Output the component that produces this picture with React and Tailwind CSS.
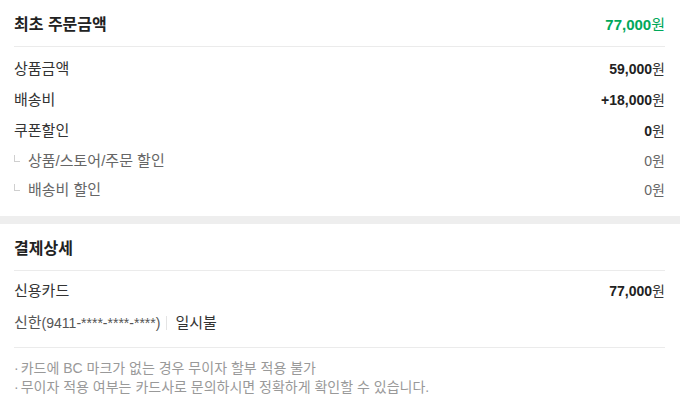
const font = { fontFamily: '"Liberation Sans", "Noto Sans CJK KR", sans-serif' };

const amounts = [
  { label: '상품금액', value: '59,000' },
  { label: '배송비', value: '+18,000' },
  { label: '쿠폰할인', value: '0' },
];

const discounts = [
  { label: '상품/스토어/주문 할인', value: '0' },
  { label: '배송비 할인', value: '0' },
];

function Corner() {
  return <span className="inline-block w-[6px] h-[7px] border-l border-b border-[#cfcfcf] mr-[8px] mb-[6px] self-center" />;
}

export default function App() {
  return (
    <div className="w-[680px] h-[412px] bg-white text-[#222]" style={font}>
      <section className="pl-[14px] pr-[15px]">
        <div className="h-[47px] pt-[4px] flex items-center justify-between border-b border-[#ebebeb]">
          <h2 className="text-[16px] font-bold">최초 주문금액</h2>
          <span className="text-[15px] font-bold text-[#00a85b]">
            77,000<span className="font-normal">원</span>
          </span>
        </div>
        <div className="pt-[6px] pb-[12px]">
          {amounts.map((row) => (
            <div key={row.label} className="h-[31px] pt-[2px] flex items-center justify-between text-[#333]">
              <span className="text-[15px]">{row.label}</span>
              <span className="text-[14px]">
                <b className="text-[#222]">{row.value}</b>원
              </span>
            </div>
          ))}
          {discounts.map((row) => (
            <div key={row.label} className="h-[29px] pt-[2px] flex items-center justify-between text-[#666]">
              <span className="flex items-center text-[15px]">
                <Corner />
                {row.label}
              </span>
              <span className="text-[14px]">{row.value}원</span>
            </div>
          ))}
        </div>
      </section>

      <div className="h-[8px] bg-[#eeeeee]" />

      <section className="pl-[14px] pr-[15px]">
        <div className="h-[47px] pt-[4px] flex items-center border-b border-[#ebebeb]">
          <h2 className="text-[16px] font-bold">결제상세</h2>
        </div>
        <div className="pt-[3px] pb-[9px] border-b border-[#ebebeb]">
          <div className="h-[32px] pt-[2px] flex items-center justify-between text-[#333]">
            <span className="text-[15px]">신용카드</span>
            <span className="text-[14px]">
              <b className="text-[#222]">77,000</b>원
            </span>
          </div>
          <div className="h-[32px] pt-[2px] flex items-center text-[14px]">
            <span className="text-[#555]">
              <span className="text-[15px]">신한</span>(9411-****-****-****)
            </span>
            <span className="w-px h-[14px] bg-[#e4e4e4] ml-[6px] mr-[8px]" />
            <span className="text-[15px] text-[#333]">일시불</span>
          </div>
        </div>
        <ul className="pt-[11px] text-[14px] leading-[19px] text-[#999]">
          <li>
            <span className="mr-[2px]">·</span>카드에 BC 마크가 없는 경우 무이자 할부 적용 불가
          </li>
          <li>
            <span className="mr-[2px]">·</span>무이자 적용 여부는 카드사로 문의하시면 정확하게 확인할 수 있습니다.
          </li>
        </ul>
      </section>
    </div>
  );
}
